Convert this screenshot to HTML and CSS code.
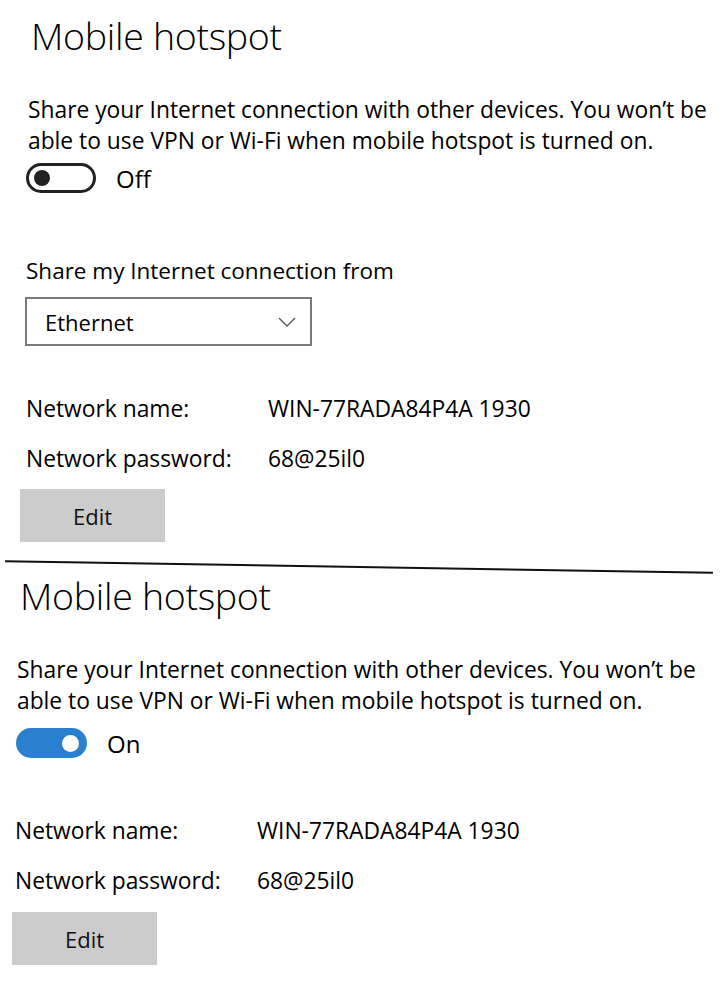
FILE: index.html
```html
<!DOCTYPE html>
<html lang="en">
<head>
    <meta charset="UTF-8">
    <meta name="viewport" content="width=device-width, initial-scale=1.0">
    <title>Mobile hotspot</title>
    <link rel="stylesheet" href="styles.css">
</head>
<body>
    <!-- Hotspot turned off -->
    <section class="panel panel-off">
        <h1 class="title">Mobile hotspot</h1>
        <p class="desc">Share your Internet connection with other devices. You won’t be able to use VPN or Wi-Fi when mobile hotspot is turned on.</p>
        <div class="toggle-row">
            <span class="toggle"><span class="knob"></span></span>
            <span class="toggle-label">Off</span>
        </div>

        <div class="field-label">Share my Internet connection from</div>
        <div class="select">
            <span>Ethernet</span>
            <svg class="chevron" width="18" height="10" viewBox="0 0 18 10">
                <polyline points="1,1 9,9 17,1" fill="none" stroke="#555" stroke-width="1.3"/>
            </svg>
        </div>

        <div class="info">
            <div class="info-row">
                <span class="info-key">Network name:</span>
                <span class="info-value">WIN-77RADA84P4A 1930</span>
            </div>
            <div class="info-row">
                <span class="info-key">Network password:</span>
                <span class="info-value">68@25il0</span>
            </div>
        </div>
        <button class="edit-btn" type="button">Edit</button>
    </section>

    <hr class="divider">

    <!-- Hotspot turned on -->
    <section class="panel panel-on">
        <h1 class="title">Mobile hotspot</h1>
        <p class="desc">Share your Internet connection with other devices. You won’t be able to use VPN or Wi-Fi when mobile hotspot is turned on.</p>
        <div class="toggle-row">
            <span class="toggle on"><span class="knob"></span></span>
            <span class="toggle-label">On</span>
        </div>

        <div class="info">
            <div class="info-row">
                <span class="info-key">Network name:</span>
                <span class="info-value">WIN-77RADA84P4A 1930</span>
            </div>
            <div class="info-row">
                <span class="info-key">Network password:</span>
                <span class="info-value">68@25il0</span>
            </div>
        </div>
        <button class="edit-btn" type="button">Edit</button>
    </section>
</body>
</html>
```

FILE: styles.css
```css
/* Global styles */
body {
    margin: 0;
    padding: 0;
    background-color: #ffffff;
    color: #000000;
    font-family: "Open Sans", "Noto Sans", Arial, sans-serif;
}

/* Panel */
.panel {
    width: 700px;
}

.panel-off {
    padding: 13px 0 0 26px;
}

.panel-on {
    padding: 5px 0 0 15px;
}

.title {
    margin: 0 0 0 5px;
    font-size: 37.5px;
    font-weight: 300;
    line-height: 46px;
    letter-spacing: -0.3px;
}

.desc {
    margin: 35px 0 0 2px;
    font-size: 22.8px;
    line-height: 31px;
    width: 690px;
}

/* Toggle switch */
.toggle-row {
    display: flex;
    align-items: center;
    gap: 20px;
    margin-top: 7px;
    height: 30px;
}

.panel-on .toggle-row {
    margin-top: 12px;
}

.toggle {
    display: flex;
    align-items: center;
    box-sizing: border-box;
    width: 70px;
    height: 30px;
    border: 3px solid #222222;
    border-radius: 15px;
    padding-left: 5px;
}

.toggle .knob {
    width: 16px;
    height: 16px;
    border-radius: 50%;
    background-color: #222222;
}

.toggle.on {
    width: 71px;
    margin-left: 1px;
    background-color: #2b7fcf;
    border-color: #2b7fcf;
    justify-content: flex-end;
    padding: 0 5px 0 0;
}

.toggle.on .knob {
    width: 17px;
    height: 17px;
    background-color: #ffffff;
}

.toggle-label {
    font-size: 24px;
}

/* Connection dropdown */
.field-label {
    margin-top: 63px;
    font-size: 22.5px;
    line-height: 30px;
}

.select {
    display: flex;
    align-items: center;
    justify-content: space-between;
    box-sizing: border-box;
    width: 287px;
    height: 49px;
    margin: 11px 0 0 -1px;
    padding: 0 14px 0 18px;
    border: 2px solid #7a7a7a;
    font-size: 22px;
}

/* Network info */
.info {
    display: flex;
    flex-direction: column;
    gap: 20px;
    margin-top: 48px;
}

.panel-on .info {
    margin-top: 58px;
}

.info-row {
    display: grid;
    grid-template-columns: 242px auto;
    font-size: 22.8px;
    line-height: 30px;
}

/* Edit button */
.edit-btn {
    display: block;
    width: 145px;
    height: 53px;
    margin: 15px 0 0 -6px;
    border: none;
    background-color: #cccccc;
    color: #111111;
    font-family: inherit;
    font-size: 22px;
}

.panel-on .edit-btn {
    margin: 16px 0 0 -3px;
}

/* Divider between the two screenshots */
.divider {
    width: 708px;
    height: 0;
    margin: 24px 0 0 5px;
    border: none;
    border-top: 2px solid #111111;
    transform: rotate(0.95deg);
}
```
